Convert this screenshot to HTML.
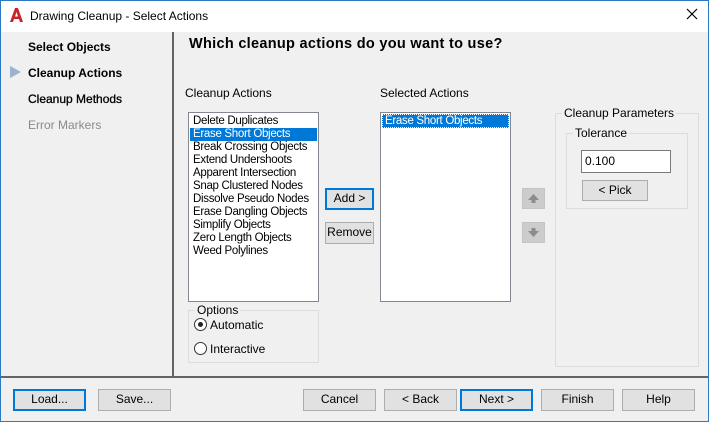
<!DOCTYPE html>
<html><head><meta charset="utf-8"><style>
*{margin:0;padding:0;box-sizing:border-box}
body{width:709px;height:422px;overflow:hidden;background:#f0f0f0;font-family:"Liberation Sans",sans-serif;font-size:12px;color:#000;position:relative}
.a{position:absolute}
.frame{left:0;top:0;width:709px;height:422px;border:1px solid #2b79c2;}
.title{left:1px;top:1px;width:707px;height:31px;background:#fff}
.btn{position:absolute;background:#e1e1e1;border:1px solid #adadad;text-align:center;font-size:12px;line-height:19px}
.btn.def{border:2px solid #0078d7;line-height:17px}
.lb{position:absolute;background:#fff;border:1px solid #828790}
.it{height:13px;line-height:13px;padding-left:3px;font-size:11.5px;letter-spacing:-0.3px;white-space:nowrap}
.sel{background:#0078d7;color:#fff}
.grp{position:absolute;border:1px solid #dcdcdc}
.gl{position:absolute;background:#f0f0f0;padding:0 2px;line-height:13px;font-size:12px}
.nav{position:absolute;left:28px;font-size:12px;font-weight:bold}
.radio{position:absolute;width:13px;height:13px;border:1px solid #333;border-radius:50%;background:#fff}
.arr{position:absolute;width:23px;height:21px;background:#cccccc;border:1px solid #c4c4c4}
</style></head><body>
<div class="a title"></div>
<svg class="a" style="left:9px;top:7px" width="15" height="16" viewBox="0 0 15 16"><path d="M1 15 L6 1 L9 1 L14 15 L11 15 L10 12 L5 12 L4 15 Z M6 9.5 L9 9.5 L7.5 5 Z" fill="#c8242b" fill-rule="evenodd"/></svg>
<div class="a" style="left:30px;top:9px;font-size:12px">Drawing Cleanup - Select Actions</div>
<svg class="a" style="left:686px;top:8px" width="12" height="12"><path d="M1 1L11 11M11 1L1 11" stroke="#000" stroke-width="1.2"/></svg>

<div class="nav" style="top:40px">Select Objects</div>
<svg class="a" style="left:10px;top:66px" width="11" height="12"><path d="M0 0L11 6L0 12Z" fill="#9db2d3"/></svg>
<div class="nav" style="top:66px">Cleanup Actions</div>
<div class="nav" style="top:92px;font-weight:normal;-webkit-text-stroke:0.3px #000">Cleanup Methods</div>
<div class="nav" style="top:118px;font-weight:normal;color:#8a8a8a">Error Markers</div>
<div class="a" style="left:172px;top:32px;width:2px;height:345px;background:#646464"></div>
<div class="a" style="left:0;top:376px;width:709px;height:2px;background:#646464"></div>

<div class="a" style="left:189px;top:36px;font-size:14.5px;font-weight:bold;letter-spacing:0.3px">Which cleanup actions do you want to use?</div>
<div class="a" style="left:185px;top:86px">Cleanup Actions</div>
<div class="lb" style="left:188px;top:112px;width:131px;height:190px;padding-top:2px;padding-left:1px;padding-right:1px">
<div class="it">Delete Duplicates</div><div class="it sel">Erase Short Objects</div><div class="it">Break Crossing Objects</div><div class="it">Extend Undershoots</div><div class="it">Apparent Intersection</div><div class="it">Snap Clustered Nodes</div><div class="it">Dissolve Pseudo Nodes</div><div class="it">Erase Dangling Objects</div><div class="it">Simplify Objects</div><div class="it">Zero Length Objects</div><div class="it">Weed Polylines</div>
</div>
<div class="btn def" style="left:325px;top:188px;width:49px;height:22px">Add &gt;</div>
<div class="btn" style="left:325px;top:222px;width:49px;height:22px">Remove</div>
<div class="a" style="left:380px;top:86px">Selected Actions</div>
<div class="lb" style="left:380px;top:112px;width:131px;height:190px;padding:1px">
<div class="it sel" style="outline:1px dotted #fff;outline-offset:-1px;height:14px;line-height:14px">Erase Short Objects</div></div>
<div class="arr" style="left:522px;top:188px"><svg width="21" height="19"><path d="M10.5 5L16 11L12.5 11L12.5 14L8.5 14L8.5 11L5 11Z" fill="#8c8c8c"/></svg></div>
<div class="arr" style="left:522px;top:222px"><svg width="21" height="19"><path d="M10.5 14L16 8L12.5 8L12.5 5L8.5 5L8.5 8L5 8Z" fill="#8c8c8c"/></svg></div>

<div class="grp" style="left:555px;top:113px;width:144px;height:254px"></div>
<div class="gl" style="left:562px;top:107px">Cleanup Parameters</div>
<div class="grp" style="left:566px;top:133px;width:122px;height:76px"></div>
<div class="gl" style="left:573px;top:127px">Tolerance</div>
<div class="a" style="left:581px;top:150px;width:90px;height:23px;background:#fff;border:1px solid #7a7a7a;padding:3px 0 0 3px">0.100</div>
<div class="btn" style="left:582px;top:180px;width:66px;height:21px">&lt; Pick</div>

<div class="grp" style="left:188px;top:310px;width:131px;height:53px"></div>
<div class="gl" style="left:195px;top:304px">Options</div>
<div class="radio" style="left:194px;top:318px"><div style="position:absolute;left:3px;top:3px;width:5px;height:5px;border-radius:50%;background:#222"></div></div>
<div class="a" style="left:210px;top:318px">Automatic</div>
<div class="radio" style="left:194px;top:342px"></div>
<div class="a" style="left:210px;top:342px">Interactive</div>

<div class="btn def" style="left:13px;top:389px;width:73px;height:22px">Load...</div>
<div class="btn" style="left:98px;top:389px;width:73px;height:22px">Save...</div>
<div class="btn" style="left:303px;top:389px;width:73px;height:22px">Cancel</div>
<div class="btn" style="left:384px;top:389px;width:73px;height:22px">&lt; Back</div>
<div class="btn def" style="left:460px;top:389px;width:73px;height:22px">Next &gt;</div>
<div class="btn" style="left:541px;top:389px;width:73px;height:22px">Finish</div>
<div class="btn" style="left:622px;top:389px;width:73px;height:22px">Help</div>
<div class="a frame"></div>
</body></html>
